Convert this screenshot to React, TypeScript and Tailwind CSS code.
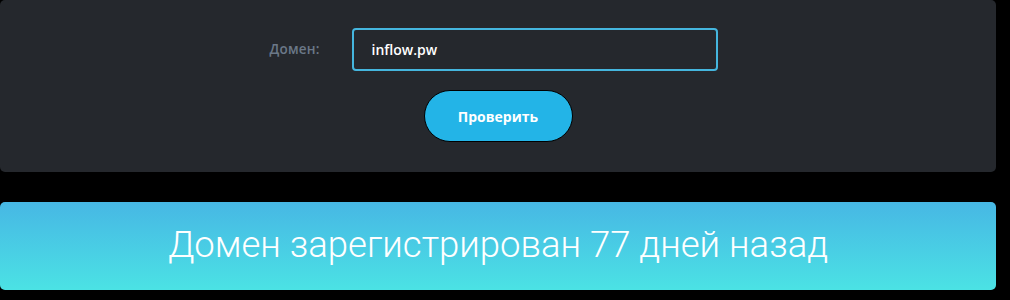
import { useState } from "react";

export default function App() {
  const [domain, setDomain] = useState("inflow.pw");

  return (
    <div className="min-h-[300px] bg-black font-['Open_Sans',sans-serif]">
      <section className="w-[996px] h-[172px] bg-[#25282d] rounded-[5px] flex flex-col items-center pt-[28px]">
        <div className="flex items-center gap-[32px] pr-[9px]">
          <label htmlFor="domain" className="w-[50px] text-[13.5px] font-semibold text-[#6b7888] tracking-[0.2px]">
            Домен:
          </label>
          <input
            id="domain"
            value={domain}
            onChange={(e) => setDomain(e.target.value)}
            className="w-[366px] h-[43px] bg-[#25282d] border-2 border-[#45b6de] rounded-[4px] pl-[18px] text-[14px] font-semibold text-white outline-none"
          />
        </div>
        <button className="mt-[19px] w-[149px] h-[52px] rounded-full bg-[#23b4e7] border border-black text-white text-[14px] font-bold">
          Проверить
        </button>
      </section>

      <div className="mt-[30px] w-[996px] h-[88px] rounded-[5px] bg-gradient-to-b from-[#47b7e4] to-[#4be2e4] flex items-center justify-center">
        <p className="font-['Roboto',sans-serif] text-[36.5px] font-light text-white pb-[1px]">
          Домен зарегистрирован 77 дней назад
        </p>
      </div>
    </div>
  );
}
